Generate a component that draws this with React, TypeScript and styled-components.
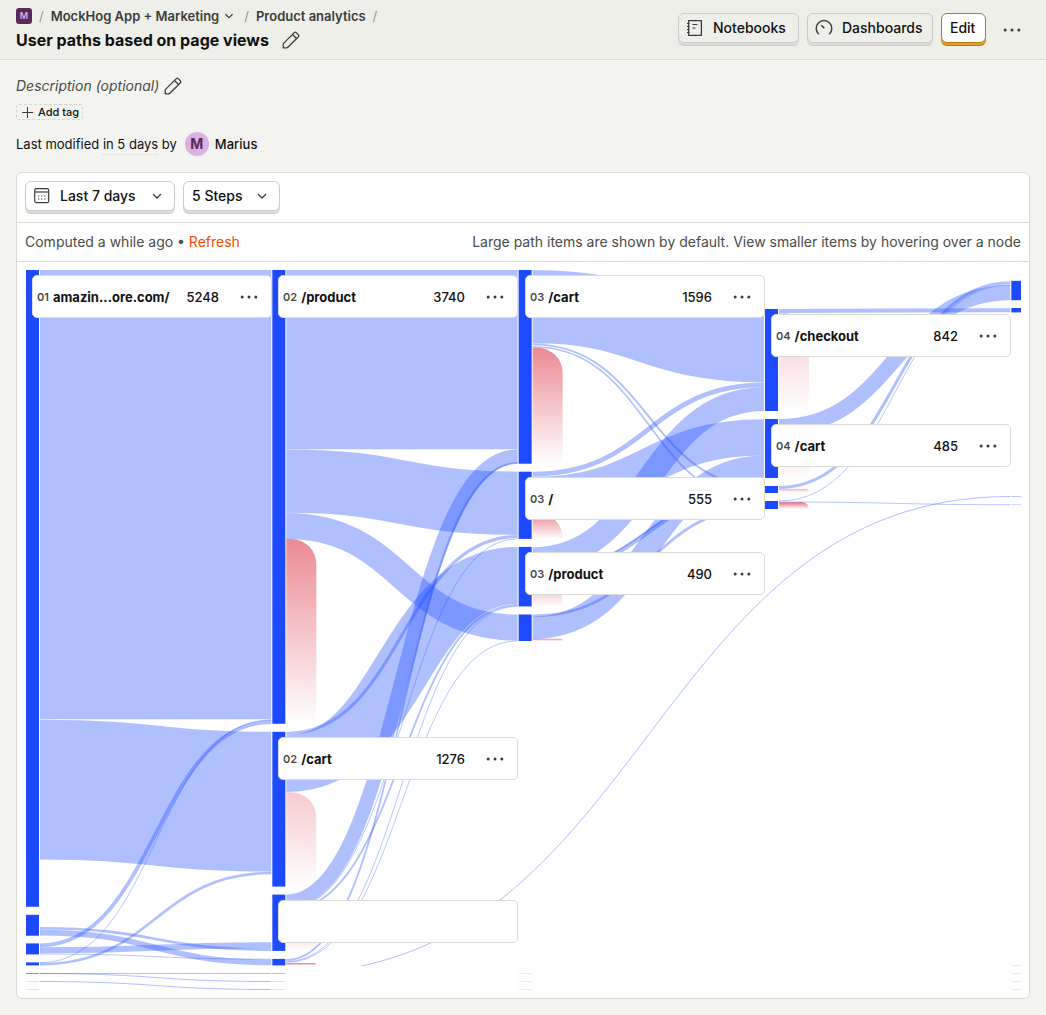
import React from "react";
import styled, { createGlobalStyle, css } from "styled-components";

const GlobalStyle = createGlobalStyle`
  *, *::before, *::after { box-sizing: border-box; }
  html { background: #f3f4ef; }
  body {
    margin: 0;
    color: #111;
    background: #f3f4ef;
    font-family: Inter, "Liberation Sans", sans-serif;
    font-size: 14px;
    line-height: 20px;
  }
  h1, p { margin: 0; }
  button { font: inherit; color: inherit; cursor: pointer; }
  a { color: inherit; text-decoration: none; }
`;

/* ---------- Icons ---------- */

const Glyph = styled.svg<{ $size: number }>`
  display: block;
  flex: none;
  width: ${(p) => p.$size}px;
  height: ${(p) => p.$size}px;
  fill: none;
  stroke: #3c3d3a;
  stroke-width: 1.5;
`;

const PencilIcon = () => (
  <Glyph $size={20} viewBox="0 0 20 20" aria-hidden="true">
    <path
      d="M2.200 17.800v-3.300a2 2 0 0 1 .6-1.400L13.300 2.600a1.300 1.300 0 0 1 1.900 0l2.200 2.200a1.300 1.300 0 0 1 0 1.900L6.900 17.200a2 2 0 0 1-1.400.6H2.200Z"
      strokeWidth="1.300"
      strokeLinejoin="round"
    />
    <path d="m11.500 4.500 4 4" strokeWidth="1.300" />
  </Glyph>
);

const PlusIcon = () => (
  <Glyph $size={14} viewBox="0 0 14 14" aria-hidden="true">
    <path d="M7.500 2v11M2 7.500h11" strokeWidth="1" />
  </Glyph>
);

const ChevronIcon = ({ size = 18 }: { size?: number }) => (
  <Glyph $size={size} viewBox="0 0 18 18" aria-hidden="true">
    <path d="m5 7 4 4 4-4" strokeWidth="1.300" />
  </Glyph>
);

const NotebookIcon = () => (
  <Glyph $size={20} viewBox="0 0 20 20" aria-hidden="true">
    <path d="M3.600 2.700h12.800v14.600H3.600z" strokeWidth="1.300" strokeLinejoin="round" />
    <path d="M2 5.500h2.600M2 8.500h2.600M2 11.500h2.600M2 14.500h2.600M7.500 6.500h5M7.500 10h3" strokeWidth="1.200" />
  </Glyph>
);

const GaugeIcon = () => (
  <Glyph $size={20} viewBox="0 0 20 20" aria-hidden="true">
    <path d="M4.800 16.200a7.800 7.800 0 1 1 10.400 0M7.300 7.300l3 3" strokeWidth="1.500" />
  </Glyph>
);

const CalendarIcon = () => (
  <Glyph $size={20} viewBox="0 0 20 20" aria-hidden="true">
    <rect x="2.700" y="2.700" width="14" height="14" rx="1.800" strokeWidth="1.200" />
    <path d="M2.700 6h14" strokeWidth="1.200" />
    <path d="M6 10h1.300M9 10h1.300M12.200 10h1.300M6 13h1.300M9 13h1.300M12.200 13h1.300" strokeWidth="1.200" />
  </Glyph>
);

const MoreIcon = () => (
  <Glyph $size={20} viewBox="0 0 20 20" aria-hidden="true">
    <g fill="#3c3d3a" stroke="none">
      <circle cx="3.200" cy="10" r="1.500" />
      <circle cx="10" cy="10" r="1.500" />
      <circle cx="16.800" cy="10" r="1.500" />
    </g>
  </Glyph>
);

/* ---------- Page header ---------- */

const Header = styled.header`
  display: flex;
  align-items: flex-start;
  justify-content: space-between;
  height: 60px;
  padding: 6px 16px 0;
  background: #eeefe9;
  border-bottom: 1px solid #dadbd6;
`;

const Breadcrumbs = styled.nav`
  display: flex;
  align-items: center;
  height: 20px;
  font-size: 13px;
  font-weight: 600;
  color: #3c3d3a;
`;

const Crumb = styled.a`
  display: flex;
  align-items: center;
  gap: 2px;
`;

const Slash = styled.span`
  margin: 0 7px;
  font-weight: 400;
  color: #94958f;
`;

const ProjectBadge = styled.span`
  display: grid;
  place-items: center;
  width: 16px;
  height: 16px;
  border-radius: 3px;
  background: #572a59;
  color: #dcb1e3;
  font-size: 9px;
  line-height: 16px;
  font-weight: 600;
`;

const TitleRow = styled.div`
  display: flex;
  align-items: center;
  gap: 12px;
  height: 28px;
`;

const Title = styled.h1`
  font-size: 16px;
  line-height: 24px;
  font-weight: 700;
`;

const IconButton = styled.button`
  display: grid;
  place-items: center;
  padding: 0;
  border: 0;
  background: none;
`;

const Actions = styled.div`
  display: flex;
  align-items: center;
  gap: 8px;
  padding-top: 7px;
`;

const tones = {
  plain: css`
    background: #eeefe9;
    border-color: #cccdcb;
    box-shadow: 0 2px 0 0 #dcdcda, 0 3px 0 0 #cccdcb;
  `,
  white: css`
    background: #fff;
    border-color: #cccdcb;
    box-shadow: 0 2px 0 0 #e0dcde, 0 3px 0 0 #cccdcb;
  `,
  accent: css`
    background: #fff;
    border-color: #b17816;
    box-shadow: 0 2px 0 0 #eb9d2a, 0 3px 0 0 #b17816;
  `,
};

const PushButton = styled.button<{ $tone?: keyof typeof tones; $icon?: boolean; $minWidth: number }>`
  display: flex;
  align-items: center;
  gap: 8px;
  height: 30px;
  min-width: ${(p) => p.$minWidth}px;
  margin-bottom: 3px;
  padding: 0 8px 0 ${(p) => (p.$icon ? 6 : 8)}px;
  font-size: 14px;
  font-weight: 500;
  border: 1px solid;
  border-radius: 6px;
  ${(p) => tones[p.$tone ?? "plain"]}
`;

const Label = styled.span`
  flex: 1;
  text-align: left;
`;

const MoreButton = styled(IconButton)`
  width: 36px;
  height: 32px;
`;

/* ---------- Insight details ---------- */

const Main = styled.main`
  padding: 16px;
`;

const Description = styled.div`
  display: flex;
  align-items: center;
  gap: 4px;
  height: 20px;
  font-style: italic;
  color: #4a4b47;
`;

const AddTag = styled.button`
  display: flex;
  align-items: center;
  gap: 4px;
  height: 16px;
  margin: 8px 0 12px;
  padding: 0 3px;
  border: 1px dashed #d5d6d0;
  border-radius: 3px;
  background: none;
  font-size: 11px;
  line-height: 14px;
  font-weight: 500;
`;

const Modified = styled.div`
  display: flex;
  align-items: center;
  height: 24px;
  font-size: 13px;
  white-space: pre;
`;

const When = styled.span`
  border-bottom: 1px dotted #d5d6d0;
`;

const Avatar = styled.span`
  display: grid;
  place-items: center;
  width: 24px;
  height: 24px;
  margin: 0 6px 0 8px;
  border-radius: 50%;
  background: #dcb1e3;
  color: #572a59;
  font-size: 14px;
  font-weight: 700;
`;

const Author = styled.span`
  font-weight: 500;
`;

/* ---------- Insight card ---------- */

const Card = styled.section`
  margin-top: 16px;
  border: 1px solid #dadbd2;
  border-radius: 6px;
  background: #fff;
`;

const Filters = styled.div`
  display: flex;
  gap: 8px;
  height: 50px;
  padding: 8px;
  border-bottom: 1px solid #dadbd2;
`;

const Status = styled.div`
  display: flex;
  align-items: center;
  justify-content: space-between;
  height: 39px;
  padding: 0 8px;
  border-bottom: 1px solid #dadbd2;
  color: #4a4b47;
`;

const Refresh = styled.a`
  color: #f54e00;
`;

const Canvas = styled.div`
  position: relative;
  height: 736px;
  overflow: hidden;
`;

const Diagram = styled.svg`
  position: absolute;
  left: 0;
  top: 0;
  display: block;
`;

const NodeCard = styled.div<{ $x: number; $y: number }>`
  position: absolute;
  left: ${(p) => p.$x}px;
  top: ${(p) => p.$y}px;
  display: flex;
  align-items: center;
  width: 240px;
  height: 43px;
  padding: 0 12px 0 4px;
  border: 1px solid #dadbd2;
  border-radius: 5px;
  background: #fff;
  font-size: 13px;
`;

const Step = styled.span`
  margin-right: 4px;
  font-size: 11px;
  font-weight: 600;
  color: #4a4b47;
`;

const PagePath = styled.span`
  flex: 1;
  font-weight: 700;
`;

const Count = styled.span`
  margin-right: 20px;
  font-weight: 500;
`;

/* ---------- Paths data, in chart coordinates ---------- */

const ORIGIN_X = 17;
const ORIGIN_Y = 262;
const COLUMN_STEP = 246.33;
const NODE_WIDTH = 13;
const nodeX = (column: number) => 26 + COLUMN_STEP * column;

type NodeDatum = [column: number, top: number, bottom: number];
const nodes: NodeDatum[] = [
  [0, 270, 906.8], [0, 914.8, 935.7], [0, 943.4, 954.4], [0, 962.4, 965.4],
  [1, 270, 723.8], [1, 731.8, 886.6], [1, 894.6, 950.9], [1, 958.9, 965.4],
  [2, 270, 463.7], [2, 471.7, 538.9], [2, 546.9, 606.4], [2, 614.5, 641],
  [3, 309, 411], [3, 419, 478], [3, 486, 493], [3, 501, 509],
  [4, 280.8, 300.2], [4, 308, 312.4],
];

type Tick = [column: number, y: number, opacity: number];
const ticks: Tick[] = [
  [0, 973, 0.6], [0, 981, 0.15], [0, 989, 0.15],
  [1, 973, 0.35], [1, 981, 0.18], [1, 989, 0.15],
  [2, 973, 0.12], [2, 981, 0.12], [2, 989, 0.12],
  [4, 496, 0.3], [4, 504, 0.2], [4, 965, 0.12], [4, 973, 0.12], [4, 981, 0.12], [4, 989, 0.12],
];

type LinkDatum = [from: number, to: number, y0: number, y1: number, width: number];
const links: LinkDatum[] = [
  [0, 1, 494.7, 494.7, 449.3],
  [0, 1, 789.6, 801.7, 139.7],
  [0, 1, 945.3, 722, 3.8],
  [0, 1, 962.7, 719.9, 0.9],
  [0, 1, 964.1, 873, 2.6],
  [0, 1, 928.3, 949.6, 2.6],
  [0, 1, 932.6, 962.4, 5.8],
  [0, 1, 950.3, 945.2, 6],
  [0, 1, 954, 959.2, 0.9],
  [0, 1, 973.5, 973.5, 1],
  [0, 1, 973.5, 981.5, 1],
  [0, 1, 981.5, 989.5, 1],
  [1, 2, 359.7, 359.7, 179.3],
  [1, 2, 481.1, 503.2, 63.4],
  [1, 2, 525.9, 627.6, 26],
  [1, 2, 733.5, 536.5, 3.2],
  [1, 2, 763.6, 575.3, 56.8],
  [1, 2, 901.7, 456.4, 14],
  [1, 2, 909.2, 538.8, 0.9],
  [1, 2, 910.5, 605, 1.8],
  [1, 2, 960, 463, 1.8],
  [1, 2, 961.7, 606.2, 0.9],
  [1, 2, 962.3, 640.8, 0.9],
  [2, 3, 306.7, 345.7, 73.3],
  [2, 3, 344.4, 487.2, 1.9],
  [2, 3, 346.7, 502, 1.6],
  [2, 3, 474.1, 384.8, 4.7],
  [2, 3, 494.8, 437.4, 36.2],
  [2, 3, 559, 399.2, 23.7],
  [2, 3, 573.8, 490, 4.4],
  [2, 3, 572.3, 488.5, 1.2],
  [2, 3, 615.9, 507, 2.8],
  [2, 3, 627.8, 466.7, 22.3],
  [3, 4, 311, 310.2, 4],
  [3, 4, 426.7, 292.7, 15.2],
  [3, 4, 487.6, 282.7, 3],
  [3, 4, 501, 285, 0.9],
  [3, 4, 502, 504.7, 0.9],
  [1, 4, 973.5, 496.5, 1],
];

type DropOff = [column: number, top: number, bottom: number, strength: number];
const dropOffs: DropOff[] = [
  [1, 539, 724, 0.58], [1, 792.3, 887, 0.26], [1, 911.5, 951, 0.45], [1, 963, 965.4, 0.7],
  [2, 347.8, 463.7, 0.58], [2, 513, 539, 0.6], [2, 576, 606.4, 0.5], [2, 638.8, 641, 0.6],
  [3, 313, 411, 0.27], [3, 434.5, 478, 0.27], [3, 488.9, 492, 0.4], [3, 502.3, 509, 0.7],
];

type CardDatum = { x: number; y: number; step?: string; path?: string; count?: string };
const cards: CardDatum[] = [
  { x: 32, y: 275, step: "01", path: "amazin...ore.com/", count: "5248" },
  { x: 278, y: 275, step: "02", path: "/product", count: "3740" },
  { x: 278, y: 737, step: "02", path: "/cart", count: "1276" },
  { x: 278, y: 900 },
  { x: 525, y: 275, step: "03", path: "/cart", count: "1596" },
  { x: 525, y: 477, step: "03", path: "/", count: "555" },
  { x: 525, y: 552, step: "03", path: "/product", count: "490" },
  { x: 771, y: 314, step: "04", path: "/checkout", count: "842" },
  { x: 771, y: 424, step: "04", path: "/cart", count: "485" },
];

const linkPath = ([from, to, y0, y1]: LinkDatum) => {
  const x0 = nodeX(from) + NODE_WIDTH + 1;
  const x1 = nodeX(to) - 1;
  const mid = (x0 + x1) / 2;
  return `M${x0},${y0}C${mid},${y0} ${mid},${y1} ${x1},${y1}`;
};

const dropOffPath = ([column, top, bottom]: DropOff) => {
  const x = nodeX(column) + NODE_WIDTH + 1;
  const r = Math.min(25, bottom - top);
  return `M${x},${top}h${30 - r}a${r},${r} 0 0 1 ${r},${r}V${bottom}H${x}Z`;
};

const PathsDiagram = () => (
  <Diagram width={1004} height={736} viewBox={`${ORIGIN_X} ${ORIGIN_Y} 1004 736`} role="img" aria-label="User paths">
    <defs>
      <clipPath id="long-links">
        <rect x={0} y={0} width={1021} height={966} />
      </clipPath>
      {dropOffs.map((d, i) => (
        <linearGradient key={i} id={`drop-${i}`} x1="0" y1="0" x2="0" y2="1">
          <stop offset="0" stopColor="#dc3545" stopOpacity={d[3]} />
          <stop offset="1" stopColor="#dc3545" stopOpacity={0} />
        </linearGradient>
      ))}
    </defs>
    {nodes.map(([column, top, bottom], i) => (
      <rect key={i} x={nodeX(column)} y={top} width={NODE_WIDTH} height={bottom - top} fill="#1d4aff" />
    ))}
    {ticks.map(([column, y, opacity], i) => (
      <rect key={i} x={nodeX(column)} y={y} width={NODE_WIDTH} height={1} fill="#1d4aff" opacity={opacity} />
    ))}
    {dropOffs.map((d, i) => (
      <path key={i} d={dropOffPath(d)} fill={`url(#drop-${i})`} />
    ))}
    <g fill="none" stroke="#1d4aff" strokeOpacity={0.35}>
      {links.map((link, i) => (
        <path
          key={i}
          d={linkPath(link)}
          strokeWidth={link[4]}
          clipPath={link[1] - link[0] > 1 ? "url(#long-links)" : undefined}
        />
      ))}
    </g>
  </Diagram>
);

export default function App() {
  return (
    <>
      <GlobalStyle />
      <Header>
        <div>
          <Breadcrumbs aria-label="Breadcrumb">
            <ProjectBadge>M</ProjectBadge>
            <Slash>/</Slash>
            <Crumb href="#project">
              MockHog App + Marketing
              <ChevronIcon size={16} />
            </Crumb>
            <Slash>/</Slash>
            <Crumb href="#insights">Product analytics</Crumb>
            <Slash>/</Slash>
          </Breadcrumbs>
          <TitleRow>
            <Title>User paths based on page views</Title>
            <IconButton aria-label="Edit name"><PencilIcon /></IconButton>
          </TitleRow>
        </div>
        <Actions>
          <PushButton $icon $minWidth={121}><NotebookIcon /><Label>Notebooks</Label></PushButton>
          <PushButton $icon $minWidth={126}><GaugeIcon /><Label>Dashboards</Label></PushButton>
          <PushButton $tone="accent" $minWidth={45}><Label>Edit</Label></PushButton>
          <MoreButton aria-label="More"><MoreIcon /></MoreButton>
        </Actions>
      </Header>
      <Main>
        <Description>
          Description (optional)
          <IconButton aria-label="Edit description"><PencilIcon /></IconButton>
        </Description>
        <AddTag><PlusIcon />Add tag</AddTag>
        <Modified>
          Last modified <When>in 5 days</When> by
          <Avatar>M</Avatar>
          <Author>Marius</Author>
        </Modified>
        <Card>
          <Filters>
            <PushButton $tone="white" $icon $minWidth={150}>
              <CalendarIcon /><Label>Last 7 days</Label><ChevronIcon />
            </PushButton>
            <PushButton $tone="white" $minWidth={97}>
              <Label>5 Steps</Label><ChevronIcon />
            </PushButton>
          </Filters>
          <Status>
            <p>Computed a while ago • <Refresh href="#refresh">Refresh</Refresh></p>
            <p>Large path items are shown by default. View smaller items by hovering over a node</p>
          </Status>
          <Canvas>
            <PathsDiagram />
            {cards.map((card) => (
              <NodeCard key={`${card.x}-${card.y}`} $x={card.x - ORIGIN_X} $y={card.y - ORIGIN_Y}>
                {card.path && (
                  <>
                    <Step>{card.step}</Step>
                    <PagePath>{card.path}</PagePath>
                    <Count>{card.count}</Count>
                    <IconButton aria-label={`Options for ${card.path}`}><MoreIcon /></IconButton>
                  </>
                )}
              </NodeCard>
            ))}
          </Canvas>
        </Card>
      </Main>
    </>
  );
}
